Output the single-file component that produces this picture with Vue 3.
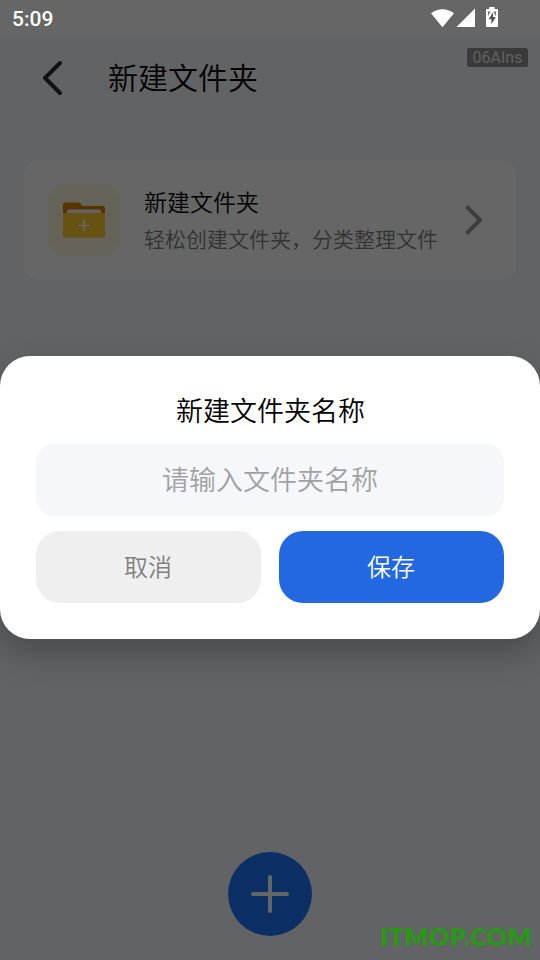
<script setup>
import { ref } from 'vue'

const folderName = ref('')
</script>

<template>
  <div class="screen">
    <div class="page">
      <div class="status-space"></div>
      <header class="topbar">
        <svg class="back" width="24" height="40" viewBox="0 0 24 40">
          <path d="M20 5 L5 20 L20 35" fill="none" stroke="#2a2b2d" stroke-width="4" stroke-linecap="round" stroke-linejoin="round" />
        </svg>
        <h1>新建文件夹</h1>
        <span class="tag">06AIns</span>
      </header>

      <section class="card">
        <div class="folder-tile">
          <svg width="42" height="36" viewBox="0 0 42 36">
            <path d="M0 14V2.5Q0 .5 2 .5H15.5Q17.2 .5 18 2L19 4H40Q42 4 42 6V14Z" fill="#e08200" />
            <path d="M4 12V9Q4 7.5 5.5 7.5H36.5Q38 7.5 38 9V12Z" fill="#f7f5ff" />
            <path d="M0 11H42V33.5Q42 35.5 40 35.5H2Q0 35.5 0 33.5Z" fill="#ffcc2b" />
            <path d="M15 23.5H27M21 17.5V29.5" stroke="#fff" stroke-width="1.7" />
          </svg>
        </div>
        <div class="card-copy">
          <h2>新建文件夹</h2>
          <p>轻松创建文件夹，分类整理文件</p>
        </div>
        <svg class="chevron" width="20" height="34" viewBox="0 0 20 34">
          <path d="M2.5 3.5 L16 17 L2.5 30.5" fill="none" stroke="#999" stroke-width="4" stroke-linejoin="round" />
        </svg>
      </section>

      <button class="add" aria-label="新建">
        <svg width="40" height="40" viewBox="0 0 40 40">
          <path d="M3 20H37M20 3V37" stroke="#fff" stroke-width="4" stroke-linecap="round" />
        </svg>
      </button>
    </div>

    <div class="overlay">
      <div class="status">
        <span class="time">5:09</span>
        <svg width="68" height="22" viewBox="0 0 68 22">
          <path d="M0 5.2Q11.5 -2.8 23 5.2L11.5 19.2Z" fill="#fff" />
          <path d="M44 .5V19H25.5Z" fill="#fff" />
          <path d="M58.2 -1H63.5V1H66Q67 1 67 2V18Q67 19 66 19H56Q55 19 55 18V2Q55 1 56 1H58.2Z" fill="#fff" />
          <path d="M57 3.5H59.8L57 8ZM62.5 3.5H65V8L64 7Z" fill="#777" />
          <path d="M62 4L57.8 11.3H60.4V16.3L64.8 9H62Z" fill="#505050" />
        </svg>
      </div>

      <div class="dialog" role="dialog">
        <h2>新建文件夹名称</h2>
        <input v-model="folderName" placeholder="请输入文件夹名称" />
        <div class="actions">
          <button class="cancel">取消</button>
          <button class="save">保存</button>
        </div>
      </div>

      <div class="watermark">ITMOP.COM</div>
    </div>
  </div>
</template>

<style>
body {
  margin: 0;
}
</style>

<style scoped>
* {
  box-sizing: border-box;
}

.screen {
  position: relative;
  width: 540px;
  height: 960px;
  overflow: hidden;
  font-family: Roboto, "Noto Sans CJK SC", sans-serif;
}

h1,
h2,
p {
  margin: 0;
  font-weight: 350;
}

button,
input {
  border: 0;
  padding: 0;
  font-family: "Noto Sans CJK SC", sans-serif;
  font-weight: 350;
}

.page {
  display: flex;
  flex-direction: column;
  height: 100%;
  background: #f5f7fb;
}

.status-space {
  height: 36px;
  background: #fff;
}

.topbar {
  display: flex;
  align-items: flex-start;
  height: 124px;
  padding: 0 12px 0 40px;
}

.back {
  margin-top: 22px;
}

h1 {
  margin: 18px auto 0 44px;
  font-family: "Noto Sans CJK SC", sans-serif;
  font-size: 30px;
  line-height: 44px;
  color: #000;
}

.tag {
  width: 61px;
  height: 19px;
  margin-top: 12px;
  border-radius: 2px;
  background: #919191;
  color: #f0f0f0;
  font-size: 16px;
  line-height: 19px;
  text-align: center;
}

.card {
  display: flex;
  align-items: center;
  height: 120px;
  margin: 0 24px;
  padding: 0 32px 0 24px;
  border-radius: 15px;
  background: #fff;
}

.folder-tile {
  display: grid;
  place-items: center;
  width: 72px;
  height: 72px;
  border-radius: 18px;
  background: #fff8dc;
}

.card-copy {
  flex: 1;
  margin-left: 24px;
  padding-bottom: 1px;
  white-space: nowrap;
  font-family: "Noto Sans CJK SC", sans-serif;
}

.card-copy h2 {
  font-size: 23px;
  line-height: 37px;
  color: #000;
}

.card-copy p {
  font-size: 21px;
  line-height: 36px;
  color: #808080;
}

.add {
  display: grid;
  place-items: center;
  align-self: center;
  width: 84px;
  height: 84px;
  margin: auto 0 24px;
  border-radius: 50%;
  background: #1f75fe;
}

.overlay {
  position: absolute;
  inset: 0;
  display: flex;
  flex-direction: column;
  background: rgba(0, 0, 0, 0.6);
}

.status {
  display: flex;
  justify-content: space-between;
  align-items: flex-start;
  height: 36px;
  padding: 8px 41px 0 12px;
}

.status svg {
  overflow: visible;
}

.time {
  color: #fff;
  font-size: 21px;
  font-weight: 500;
  line-height: 23px;
}

.dialog {
  display: flex;
  flex-direction: column;
  height: 283px;
  margin-top: 320px;
  padding: 36px;
  border-radius: 30px;
  background: #fff;
  box-shadow: 0 14px 32px rgba(0, 0, 0, 0.25);
}

.dialog h2 {
  height: 52px;
  padding-left: 1px;
  font-family: "Noto Sans CJK SC", sans-serif;
  font-size: 27px;
  line-height: 36px;
  text-align: center;
  color: #000;
}

input {
  width: 100%;
  height: 72px;
  padding-bottom: 4px;
  border-radius: 18px;
  background: #f5f7fb;
  font-size: 27px;
  text-align: center;
}

input::placeholder {
  color: #a0a1a3;
}

.actions {
  display: grid;
  grid-template-columns: 1fr 1fr;
  gap: 18px;
  margin-top: 15px;
}

.actions button {
  height: 72px;
  padding: 0 1px 3px 0;
  border-radius: 24px;
  font-size: 24px;
}

.cancel {
  background: #efefef;
  color: #808080;
}

.save {
  background: #2468e1;
  color: #fff;
}

.watermark {
  margin: auto 8px 6px auto;
  color: #289914;
  font-family: Lato, sans-serif;
  font-size: 25px;
  font-weight: 800;
  letter-spacing: 0.5px;
  line-height: 36px;
}
</style>
